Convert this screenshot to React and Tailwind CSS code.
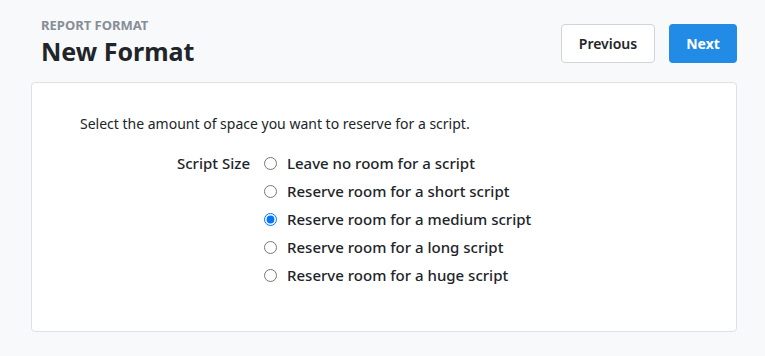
export default function App() {
  const options = [
    "Leave no room for a script",
    "Reserve room for a short script",
    "Reserve room for a medium script",
    "Reserve room for a long script",
    "Reserve room for a huge script",
  ];
  return (
    <div
      className="min-h-screen w-full bg-[#f8f9fa] text-[#212529] pl-[31px] pr-[28px] pt-[17px]"
      style={{ fontFamily: '"Noto Sans", "Open Sans", sans-serif' }}
    >
      <div className="flex items-start justify-between pl-[10px]">
        <div>
          <div className="text-[13px] font-bold text-[#868e96] leading-[16px] uppercase">Report Format</div>
          <h1 className="text-[25px] font-bold leading-[34px] mt-[1px]">New Format</h1>
        </div>
        <div className="flex gap-[14px] mt-[7px]">
          <button className="h-[39px] w-[94px] rounded-[4px] border border-[#ced4da] bg-white text-[14px] font-semibold text-[#212529]">
            Previous
          </button>
          <button className="h-[39px] w-[68px] rounded-[4px] bg-[#228be6] text-[14px] font-bold text-white">
            Next
          </button>
        </div>
      </div>
      <div className="mt-[14px] h-[250px] rounded-[4px] border border-[#dee2e6] bg-white pl-[48px] pt-[31px]">
        <p className="text-[14px] leading-[20px]">Select the amount of space you want to reserve for a script.</p>
        <div className="flex mt-[19px] pl-[96px]">
          <div className="text-[15px] leading-[20px] font-medium w-[88px] pr-[14px] text-right">Script Size</div>
          <div className="flex flex-col gap-[8px]">
            {options.map((o, i) => (
              <label key={o} className="flex items-center gap-[10px] text-[15px] leading-[20px] font-medium">
                <input type="radio" name="script" defaultChecked={i === 2} className="m-0 w-[13px] h-[13px]" />
                {o}
              </label>
            ))}
          </div>
        </div>
      </div>
    </div>
  );
}
